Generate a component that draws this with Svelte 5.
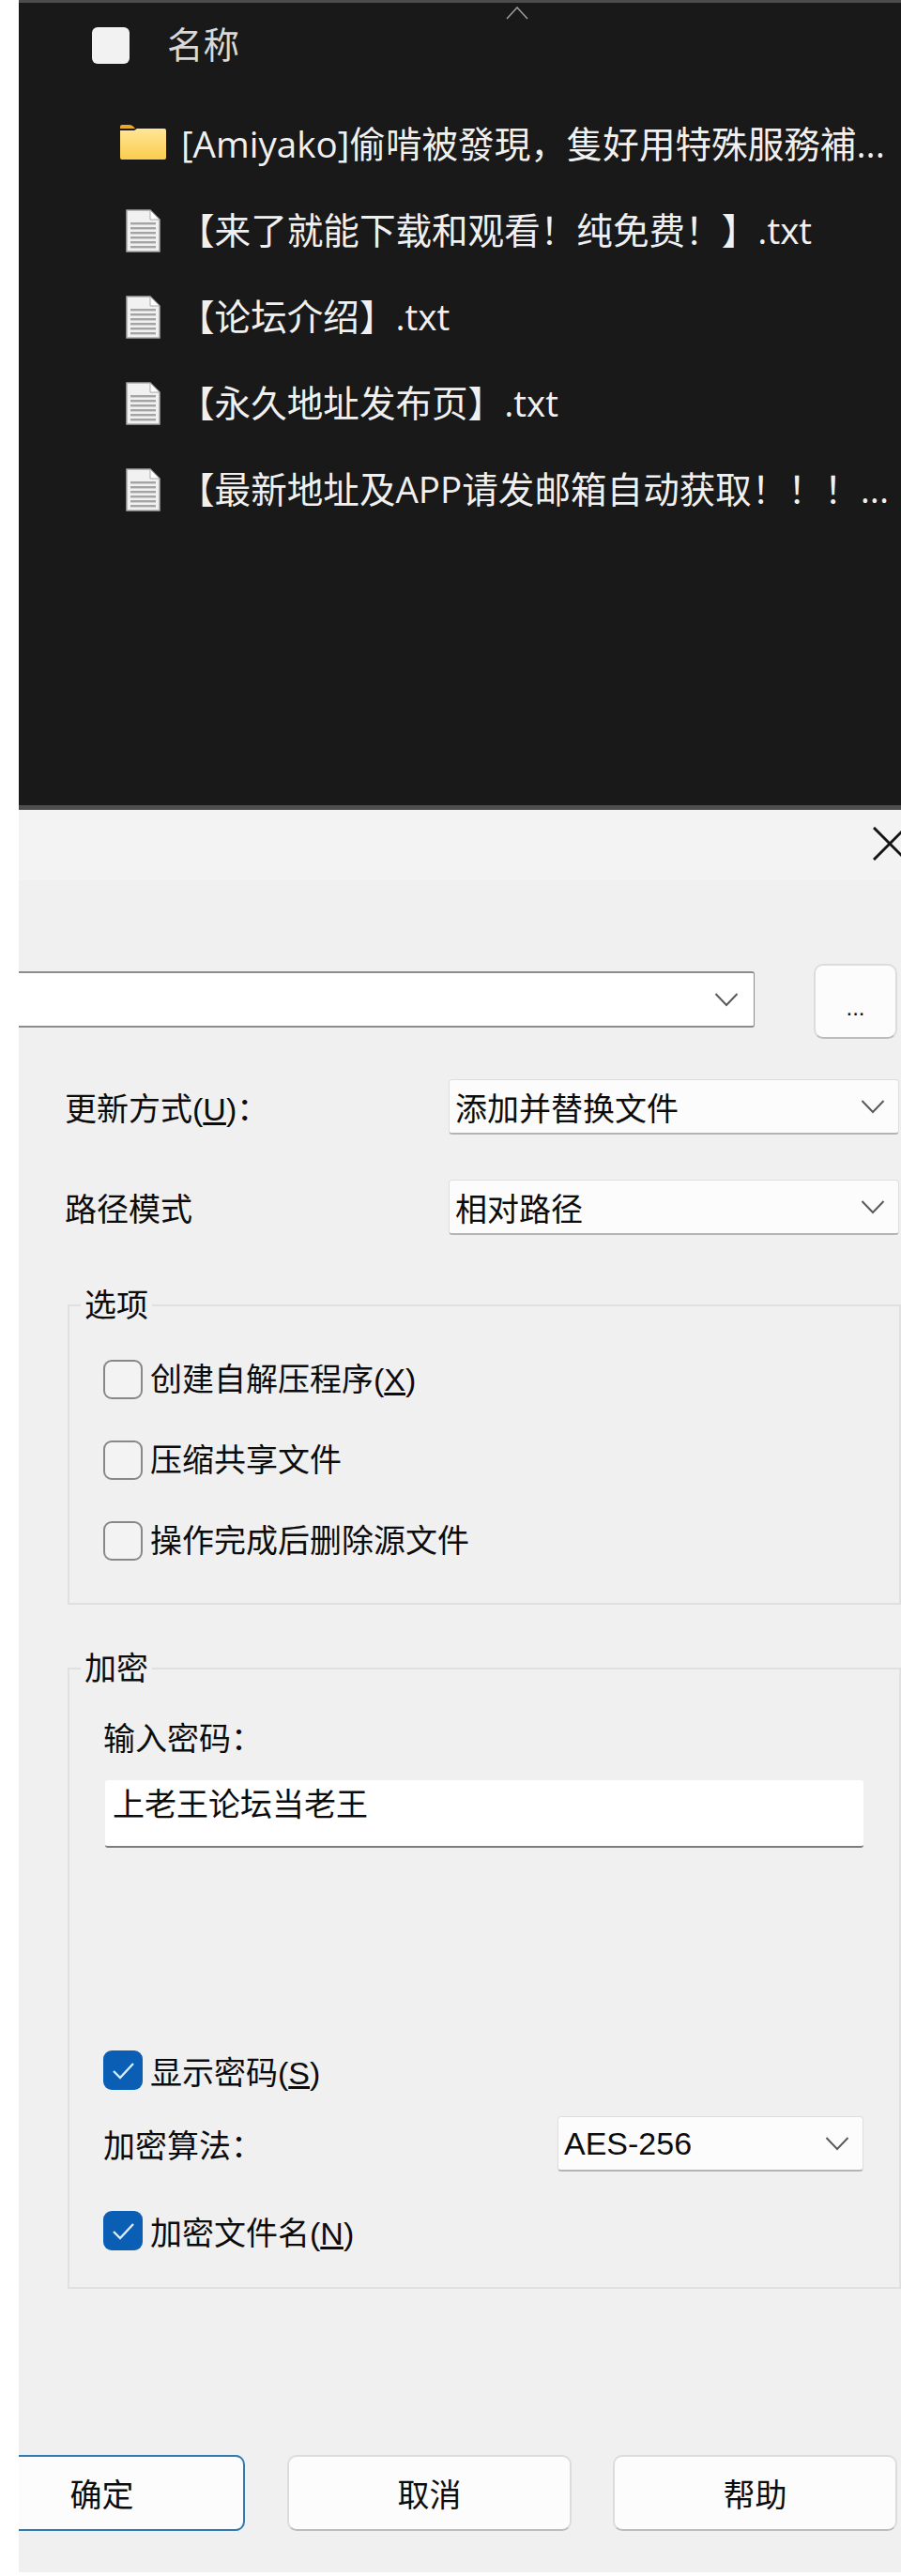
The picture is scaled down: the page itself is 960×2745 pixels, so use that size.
<script>
    const files = [
        { kind: 'folder', name: '[Amiyako]偷啃被發現，隻好用特殊服務補...' },
        { kind: 'doc', name: '【来了就能下载和观看！纯免费！】.txt' },
        { kind: 'doc', name: '【论坛介绍】.txt' },
        { kind: 'doc', name: '【永久地址发布页】.txt' },
        { kind: 'doc', name: '【最新地址及APP请发邮箱自动获取！！！...' }
    ];
    const docLines = [14, 19, 24, 29, 34, 39];
</script>

{#snippet chevron()}
    <svg class="chev" viewBox="0 0 26 16" width="26" height="16">
        <path d="M1.5 2 L13 14 L24.5 2" fill="none" stroke="#5a5a5a" stroke-width="2" />
    </svg>
{/snippet}

{#snippet check(on, label, key)}
    <div class="check">
        <span class="box" class:on>
            {#if on}
                <svg viewBox="0 0 42 42" width="42" height="42">
                    <path d="M11 22 L18 29 L32 14" fill="none" stroke="#d8ecff" stroke-width="2.4" />
                </svg>
            {/if}
        </span>
        <span class="label">{label}{#if key}(<u>{key}</u>){/if}</span>
    </div>
{/snippet}

<div class="shot" lang="zh-CN">
    <section class="files">
        <svg class="sort" viewBox="0 0 24 14" width="24" height="14">
            <path d="M1 13 L12 1 L23 13" fill="none" stroke="#9a9a9a" stroke-width="1.6" />
        </svg>
        <div class="head">
            <span class="headbox"></span>
            <span class="title">名称</span>
        </div>
        <ul>
            {#each files as f}
                <li class:isfolder={f.kind === 'folder'}>
                    <span class="icon">
                        {#if f.kind === 'folder'}
                            <svg viewBox="0 0 49 37" width="49" height="37">
                                <defs>
                                    <linearGradient id="fold" x1="0" y1="0" x2="0" y2="1">
                                        <stop offset="0" stop-color="#ffe596" />
                                        <stop offset="1" stop-color="#fbcd4e" />
                                    </linearGradient>
                                </defs>
                                <path d="M0 2 Q0 0 2 0 H10 Q13 0 16 4 H0 Z" fill="#e9a825" />
                                <path d="M0 6 H15 L18 4 H47 Q49 4 49 6 V35 Q49 37 47 37 H2 Q0 37 0 35 Z" fill="url(#fold)" />
                            </svg>
                        {:else}
                            <svg viewBox="0 0 37 46" width="37" height="46">
                                <path d="M1 1 H26 L36 11 V45 H1 Z" fill="#f1f1f1" stroke="#a8a8a8" stroke-width="1.5" />
                                <path d="M26 1 V11 H36 Z" fill="#fff" stroke="#a8a8a8" stroke-width="1" />
                                {#each docLines as y}
                                    <rect x="5" y={y} width="27" height="2.4" fill="#a4a4a4" />
                                {/each}
                            </svg>
                        {/if}
                    </span>
                    <span class="name">{f.name}</span>
                </li>
            {/each}
        </ul>
    </section>

    <section class="dialog">
        <div class="titlebar">
            <svg viewBox="0 0 36 36" width="36" height="36">
                <path d="M1 1 L35 35 M35 1 L1 35" fill="none" stroke="#141414" stroke-width="3" />
            </svg>
        </div>

        <div class="content">
            <div class="pathrow">
                <div class="pathbox">{@render chevron()}</div>
                <button class="browse">...</button>
            </div>

            <div class="field first">
                <span>更新方式(<u>U</u>)：</span>
                <div class="select wide">添加并替换文件{@render chevron()}</div>
            </div>
            <div class="field second">
                <span>路径模式</span>
                <div class="select wide">相对路径{@render chevron()}</div>
            </div>

            <fieldset class="options">
                <legend>选项</legend>
                <div class="inner">
                    {@render check(false, '创建自解压程序', 'X')}
                    {@render check(false, '压缩共享文件')}
                    {@render check(false, '操作完成后删除源文件')}
                </div>
            </fieldset>

            <fieldset class="crypt">
                <legend>加密</legend>
                <div class="inner">
                    <div class="pwlabel">输入密码：</div>
                    <div class="pw">上老王论坛当老王</div>
                    <div class="showpw">{@render check(true, '显示密码', 'S')}</div>
                    <div class="algo">
                        <span>加密算法：</span>
                        <div class="select narrow">AES-256{@render chevron()}</div>
                    </div>
                    {@render check(true, '加密文件名', 'N')}
                </div>
            </fieldset>

            <div class="actions">
                <button class="ok">确定</button>
                <button>取消</button>
                <button>帮助</button>
            </div>
        </div>
    </section>
</div>

<style>
    :global(body) {
        margin: 0;
        background: #fff;
    }
    .shot {
        height: 2745px;
        padding-left: 20px;
        box-sizing: border-box;
        overflow: hidden;
        font-family: "Liberation Sans", "Noto Sans CJK SC", sans-serif;
        font-size: 34px;
        color: #0c0c0c;
    }

    .files {
        position: relative;
        height: 863px;
        box-sizing: border-box;
        background: #191919;
        border-top: 3px solid #4c4c4c;
        border-bottom: 5px solid #4e4e4e;
        color: #f0f0f0;
        font-family: "Open Sans", "Noto Sans CJK SC", sans-serif;
        font-size: 38.6px;
    }
    .sort {
        position: absolute;
        left: 519px;
        top: 4px;
    }
    .head {
        display: flex;
        align-items: center;
        gap: 40px;
        height: 40px;
        padding: 25px 0 0 78px;
    }
    .headbox {
        width: 40px;
        height: 39px;
        background: #f2f2f2;
        border-radius: 6px;
    }
    .title {
        margin-bottom: 7px;
        color: #d8d8d8;
    }
    ul {
        list-style: none;
        margin: 40px 0 0;
        padding: 0 0 0 108px;
    }
    li {
        display: flex;
        align-items: center;
        gap: 13px;
        height: 92px;
    }
    li.isfolder {
        gap: 16px;
    }
    li.isfolder .icon {
        margin-bottom: 5px;
    }
    .icon {
        display: flex;
        justify-content: center;
        width: 49px;
        flex: none;
    }
    .name {
        margin-bottom: 6px;
        white-space: nowrap;
    }

    .dialog {
        height: 1878px;
        background: #f0f0f0;
    }
    .titlebar {
        display: flex;
        justify-content: flex-end;
        height: 75px;
        box-sizing: border-box;
        padding-top: 18px;
        background: #f3f3f3;
        overflow: hidden;
    }
    .titlebar svg {
        margin-right: -6px;
        flex: none;
    }
    .content {
        overflow: hidden;
    }

    .pathrow {
        display: flex;
        align-items: flex-start;
        gap: 63px;
        padding: 89px 4px 0 0;
    }
    .pathbox {
        display: flex;
        align-items: center;
        justify-content: flex-end;
        width: 784px;
        height: 60px;
        margin-top: 8px;
        padding-right: 16px;
        box-sizing: border-box;
        background: #fff;
        border: 2px solid #8c8c8c;
        border-left: none;
        border-right-width: 1px;
        border-radius: 0 3px 3px 0;
    }
    button {
        font: inherit;
        color: inherit;
        background: #fcfcfc;
        border: 2px solid #dcdcdc;
        border-bottom-color: #bcbcbc;
        border-radius: 10px;
        padding: 0;
    }
    .browse {
        width: 89px;
        height: 80px;
        font-size: 24px;
        padding-top: 14px;
    }

    .field {
        display: flex;
        align-items: center;
        justify-content: space-between;
        padding: 0 2px 0 49px;
    }
    .field.first {
        margin-top: 43px;
    }
    .field.second {
        margin-top: 48px;
    }
    .select {
        display: flex;
        align-items: center;
        justify-content: space-between;
        height: 59px;
        box-sizing: border-box;
        padding: 0 14px 0 6px;
        background: #fcfcfc;
        border: 1px solid #dedede;
        border-bottom: 2px solid #b4b4b4;
        border-radius: 4px;
        white-space: nowrap;
    }
    .select.wide {
        width: 480px;
    }
    .select.narrow {
        width: 326px;
    }

    fieldset {
        margin: 0 0 0 52px;
        padding: 0;
        min-width: 0;
        border: 2px solid #e0e0e0;
    }
    legend {
        margin-left: 12px;
        padding: 0 4px;
        line-height: 40px;
    }
    .options {
        margin-top: 55px;
    }
    .options .inner {
        display: flex;
        flex-direction: column;
        gap: 44px;
        padding: 38px 0 45px 36px;
    }
    .options .label {
        margin-bottom: 6px;
    }
    .crypt {
        margin-top: 48px;
    }
    .crypt .inner {
        padding: 35px 0 39px 36px;
    }
    .check {
        display: flex;
        align-items: center;
        gap: 8px;
        height: 42px;
    }
    .box {
        width: 42px;
        height: 42px;
        box-sizing: border-box;
        flex: none;
        background: #f3f3f3;
        border: 2px solid #888;
        border-radius: 9px;
    }
    .box.on {
        background: #0a5fb4;
        border: none;
    }
    .box svg {
        display: block;
    }
    .pwlabel {
        line-height: 40px;
    }
    .pw {
        width: 808px;
        height: 72px;
        margin: 24px 0 0 2px;
        padding: 0 0 0 8px;
        box-sizing: border-box;
        line-height: 52px;
        background: #fff;
        border-bottom: 2px solid #7c7c7c;
        border-radius: 3px;
    }
    .showpw {
        margin-top: 216px;
    }
    .algo {
        display: flex;
        align-items: center;
        justify-content: space-between;
        margin: 28px 38px 42px 0;
    }

    .actions {
        display: flex;
        gap: 44px;
        margin-top: 177px;
    }
    .actions button {
        width: 303px;
        height: 81px;
    }
    .actions .ok {
        margin-left: -64px;
        margin-right: 1px;
        width: 305px;
        border-color: #2f7bb0;
    }
</style>
